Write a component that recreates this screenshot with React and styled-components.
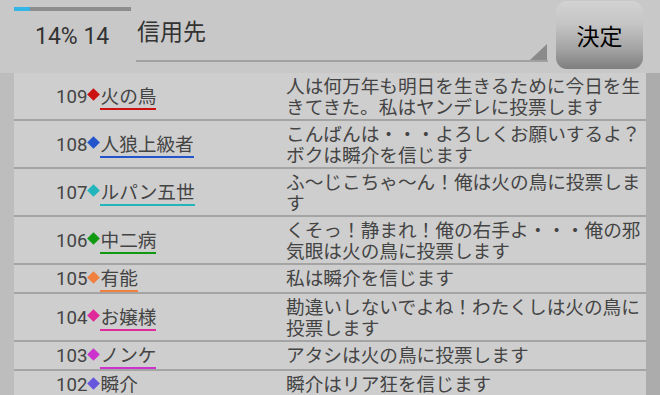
import React from 'react';
import styled, { createGlobalStyle } from 'styled-components';

const Global = createGlobalStyle`
  *, *::before, *::after { box-sizing: border-box; }
  html, body { margin: 0; padding: 0; background: #c8c8c8; }
  body {
    font-family: Roboto, "Noto Sans CJK JP", sans-serif;
    overflow: hidden;
  }
`;

const Screen = styled.div`
  width: 660px;
  height: 395px;
  display: flex;
  flex-direction: column;
  background: #c8c8c8;
  overflow: hidden;
`;

const Header = styled.div`
  height: 73px;
  flex-shrink: 0;
  display: flex;
  align-items: flex-start;
`;

const StatusBox = styled.div`
  width: 136px;
  padding: 7px 0 0 14px;
  display: flex;
  flex-direction: column;
`;

const Progress = styled.div`
  width: 117px;
  height: 4px;
  background: #8d8d8d;
  display: flex;
`;

const ProgressFill = styled.div`
  height: 100%;
  background: #33b5e5;
`;

const Stat = styled.div`
  margin: 13px 0 0 21px;
  font-size: 23px;
  line-height: 26px;
  color: #333;
  white-space: nowrap;
`;

const Spinner = styled.div`
  width: 412px;
  height: 62px;
  display: flex;
  justify-content: space-between;
  align-items: flex-end;
  border-bottom: 2px solid #a0a0a0;
`;

const SpinnerText = styled.div`
  align-self: flex-start;
  padding: 18px 0 0 1px;
  font-size: 23px;
  line-height: 30px;
  color: #333;
`;

const Corner = styled.svg`
  display: block;
  width: 17px;
  height: 16px;
  margin-right: 1px;
`;

const DecideButton = styled.button`
  margin: 1px 0 0 8px;
  width: 87px;
  height: 68px;
  border: none;
  border-radius: 11px;
  background: linear-gradient(#d3d3d3 0%, #c4c4c4 35%, #a4a4a4 70%, #7e7e7e 100%);
  font-family: Roboto, "Noto Sans CJK JP", sans-serif;
  font-size: 23px;
  color: #000;
  padding: 0;
  display: flex;
  align-items: center;
  justify-content: center;
`;

const Body = styled.div`
  flex: 1;
  border-left: 14px solid #bdbdbd;
  border-right: 14px solid #acacac;
  background: #cecece;
  display: flex;
  flex-direction: column;
`;

const Row = styled.div`
  display: grid;
  grid-template-columns: 269px 1fr;
  border-bottom: 2px solid #a4a4a4;
  color: #444;
`;

const NameCell = styled.div`
  display: flex;
  align-items: center;
  padding: 4px 0 0 42px;
`;

const NameGroup = styled.div`
  display: flex;
  align-items: flex-start;
  font-size: 18.67px;
  line-height: 21px;
`;

const Num = styled.span`
  white-space: nowrap;
`;

const Diamond = styled.span`
  display: block;
  width: 9px;
  height: 9px;
  margin: 3.5px 2px 0;
  background: ${p => p.$c};
  transform: rotate(45deg);
`;

const Name = styled.span`
  white-space: nowrap;
  border-bottom: 2px solid ${p => p.$c};
`;

const TextCell = styled.div`
  padding: 4px 0 0 3px;
  font-size: 18.67px;
  line-height: 21px;
`;

const rows = [
  { n: 109, name: '火の鳥', c: '#cc1111', text: '人は何万年も明日を生きるために今日を生きてきた。私はヤンデレに投票します' },
  { n: 108, name: '人狼上級者', c: '#2255cc', text: 'こんばんは・・・よろしくお願いするよ？ボクは瞬介を信じます' },
  { n: 107, name: 'ルパン五世', c: '#22b5bb', text: 'ふ～じこちゃ～ん！俺は火の鳥に投票します' },
  { n: 106, name: '中二病', c: '#119911', text: 'くそっ！静まれ！俺の右手よ・・・俺の邪気眼は火の鳥に投票します' },
  { n: 105, name: '有能', c: '#f08040', text: '私は瞬介を信じます' },
  { n: 104, name: 'お嬢様', c: '#e02a9a', text: '勘違いしないでよね！わたくしは火の鳥に投票します' },
  { n: 103, name: 'ノンケ', c: '#cc33cc', text: 'アタシは火の鳥に投票します' },
  { n: 102, name: '瞬介', c: '#6655dd', text: '瞬介はリア狂を信じます' },
];

export default function App() {
  const progress = 14;
  return (
    <Screen>
      <Global />
      <Header>
        <StatusBox>
          <Progress>
            <ProgressFill style={{ width: `${(progress / 100) * 117}px` }} />
          </Progress>
          <Stat>14% 14</Stat>
        </StatusBox>
        <Spinner>
          <SpinnerText>信用先</SpinnerText>
          <Corner viewBox="0 0 17 16">
            <polygon points="17,0 17,16 0,16" fill="#8a8a8a" />
          </Corner>
        </Spinner>
        <DecideButton>決定</DecideButton>
      </Header>
      <Body>
        {rows.map(r => (
          <Row key={r.n}>
            <NameCell>
              <NameGroup>
                <Num>{r.n}</Num>
                <Diamond $c={r.c} />
                <Name $c={r.c}>{r.name}</Name>
              </NameGroup>
            </NameCell>
            <TextCell>{r.text}</TextCell>
          </Row>
        ))}
      </Body>
    </Screen>
  );
}
